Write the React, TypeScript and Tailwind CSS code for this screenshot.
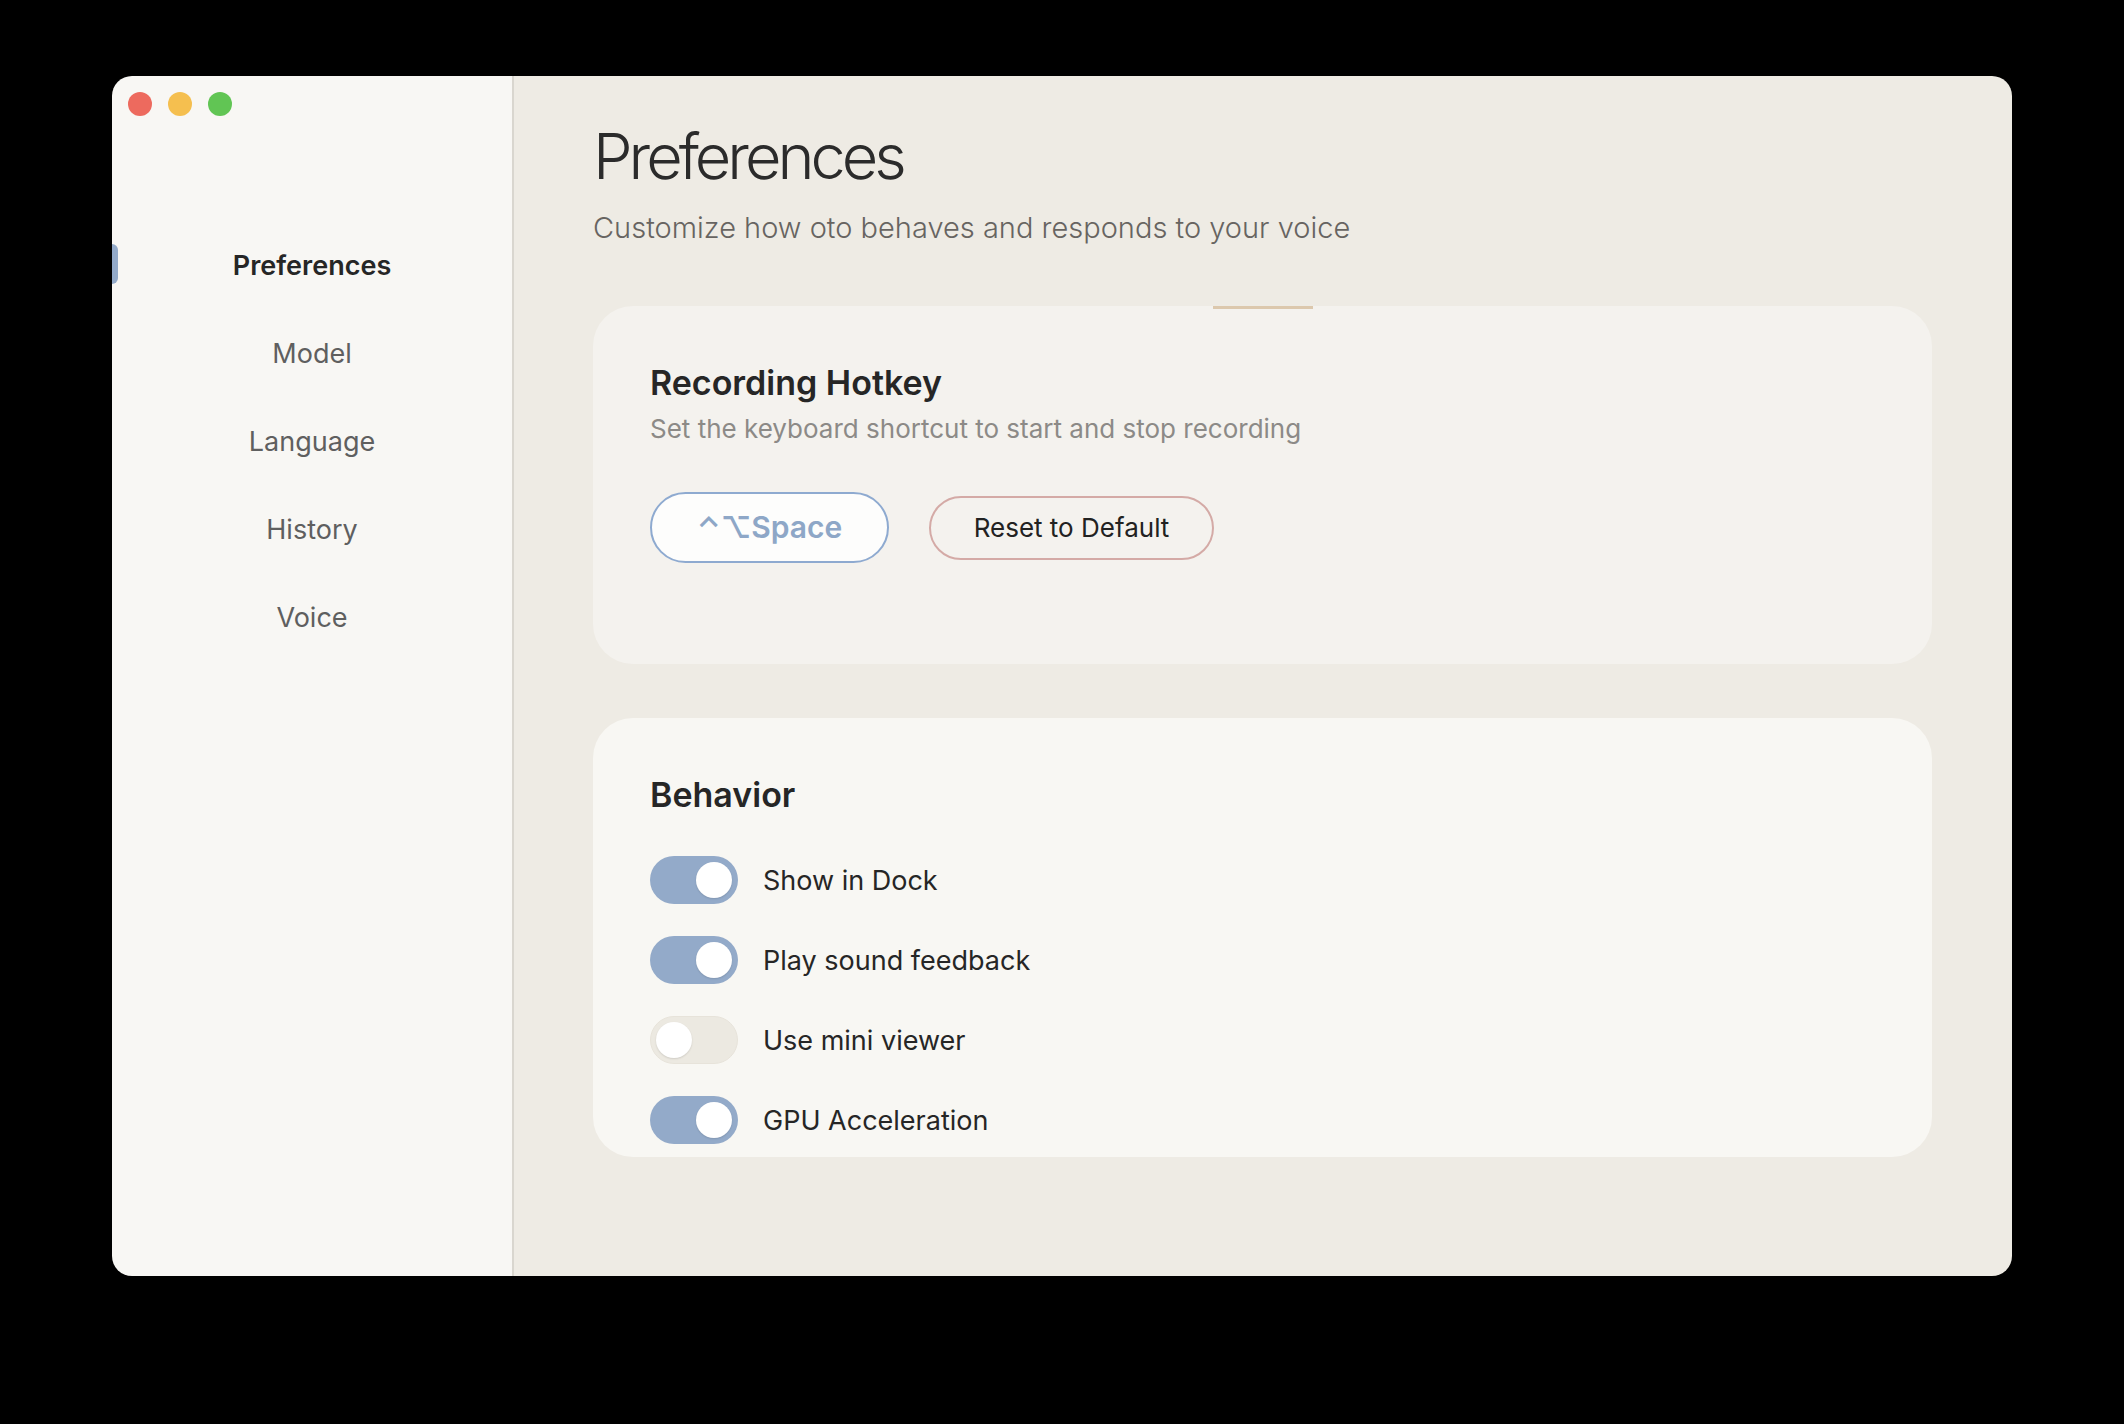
import React from "react";

const font = { fontFamily: "Inter, 'Noto Sans', 'DejaVu Sans', sans-serif" } as const;

function Toggle({ on }: { on: boolean }) {
  return (
    <div
      className={
        on
          ? "w-[88px] h-[48px] rounded-full bg-[#93aac9] flex items-center justify-end px-[6px]"
          : "w-[88px] h-[48px] rounded-full bg-[#ece9e1] border border-[#e7e3da] flex items-center justify-start px-[5px]"
      }
    >
      <div className="w-[36px] h-[36px] rounded-full bg-white shadow-[0_1px_2px_rgba(0,0,0,0.12)]" />
    </div>
  );
}

const navItems = ["Preferences", "Model", "Language", "History", "Voice"];
const rows: [string, boolean][] = [
  ["Show in Dock", true],
  ["Play sound feedback", true],
  ["Use mini viewer", false],
  ["GPU Acceleration", true],
];

export default function App() {
  return (
    <div className="w-[2124px] h-[1424px] bg-black pt-[76px] pl-[112px]" style={font}>
      <div className="w-[1900px] h-[1200px] rounded-[20px] overflow-hidden flex">
        {/* Sidebar */}
        <div className="w-[402px] h-full bg-[#f8f7f4] border-r-2 border-[#d9d6cf] flex flex-col">
          <div className="flex gap-[16px] pt-[16px] pl-[16px]">
            <div className="w-[24px] h-[24px] rounded-full bg-[#ed6a5e]" />
            <div className="w-[24px] h-[24px] rounded-full bg-[#f5bf4f]" />
            <div className="w-[24px] h-[24px] rounded-full bg-[#61c554]" />
          </div>
          <div className="flex flex-col mt-[105px]">
            {navItems.map((item, i) => (
              <div key={item} className="relative h-[88px] flex items-center justify-center">
                {i === 0 && (
                  <div className="absolute left-0 top-[23px] w-[6px] h-[40px] rounded-r-full bg-[#93aac9]" />
                )}
                <span
                  className={
                    i === 0
                      ? "text-[27px] leading-none font-semibold text-[#262626]"
                      : "text-[27px] leading-none font-normal text-[#5f5f5f]"
                  }
                >
                  {item}
                </span>
              </div>
            ))}
          </div>
        </div>

        {/* Main */}
        <div className="flex-1 h-full bg-[#eeebe4] pl-[79px] pr-[80px] flex flex-col">
          <h1 className="mt-[49px] text-[63px] leading-none font-light text-[#2b2b2b] tracking-[-4px]">
            Preferences
          </h1>
          <p className="mt-[25px] text-[29px] leading-none font-light text-[#676461]">
            Customize how oto behaves and responds to your voice
          </p>

          {/* Recording Hotkey card */}
          <div className="relative mt-[64px] h-[358px] rounded-[40px] bg-[#f4f2ee] pt-[60px] pl-[57px] flex flex-col">
            <div className="absolute top-0 left-1/2 -translate-x-1/2 w-[100px] h-[3px] bg-[#dcc8ad]" />
            <h2 className="text-[34px] leading-none font-semibold text-[#262626]">Recording Hotkey</h2>
            <p className="mt-[16px] text-[26px] leading-none text-[#8c8a87]">
              Set the keyboard shortcut to start and stop recording
            </p>
            <div className="mt-[50px] flex items-center gap-[40px]">
              <div className="w-[239px] h-[71px] rounded-full border-2 border-[#8eaad0] bg-[#fdfdfc] flex items-center justify-center">
                <span className="text-[30px] leading-none font-semibold text-[#8ea7c7] -mt-[2px]">⌃⌥Space</span>
              </div>
              <div className="w-[285px] h-[64px] rounded-full border-2 border-[#d4aaa6] flex items-center justify-center">
                <span className="text-[26px] leading-none text-[#222222]">Reset to Default</span>
              </div>
            </div>
          </div>

          {/* Behavior card */}
          <div className="mt-[54px] h-[439px] rounded-[40px] bg-[#f8f7f3] pt-[60px] pl-[57px] flex flex-col overflow-hidden">
            <h2 className="text-[34px] leading-none font-semibold text-[#262626]">Behavior</h2>
            <div className="mt-[44px] flex flex-col gap-[32px]">
              {rows.map(([label, on]) => (
                <div key={label} className="flex items-center gap-[25px]">
                  <Toggle on={on} />
                  <span className="text-[27px] leading-none text-[#262626]">{label}</span>
                </div>
              ))}
            </div>
          </div>
        </div>
      </div>
    </div>
  );
}
